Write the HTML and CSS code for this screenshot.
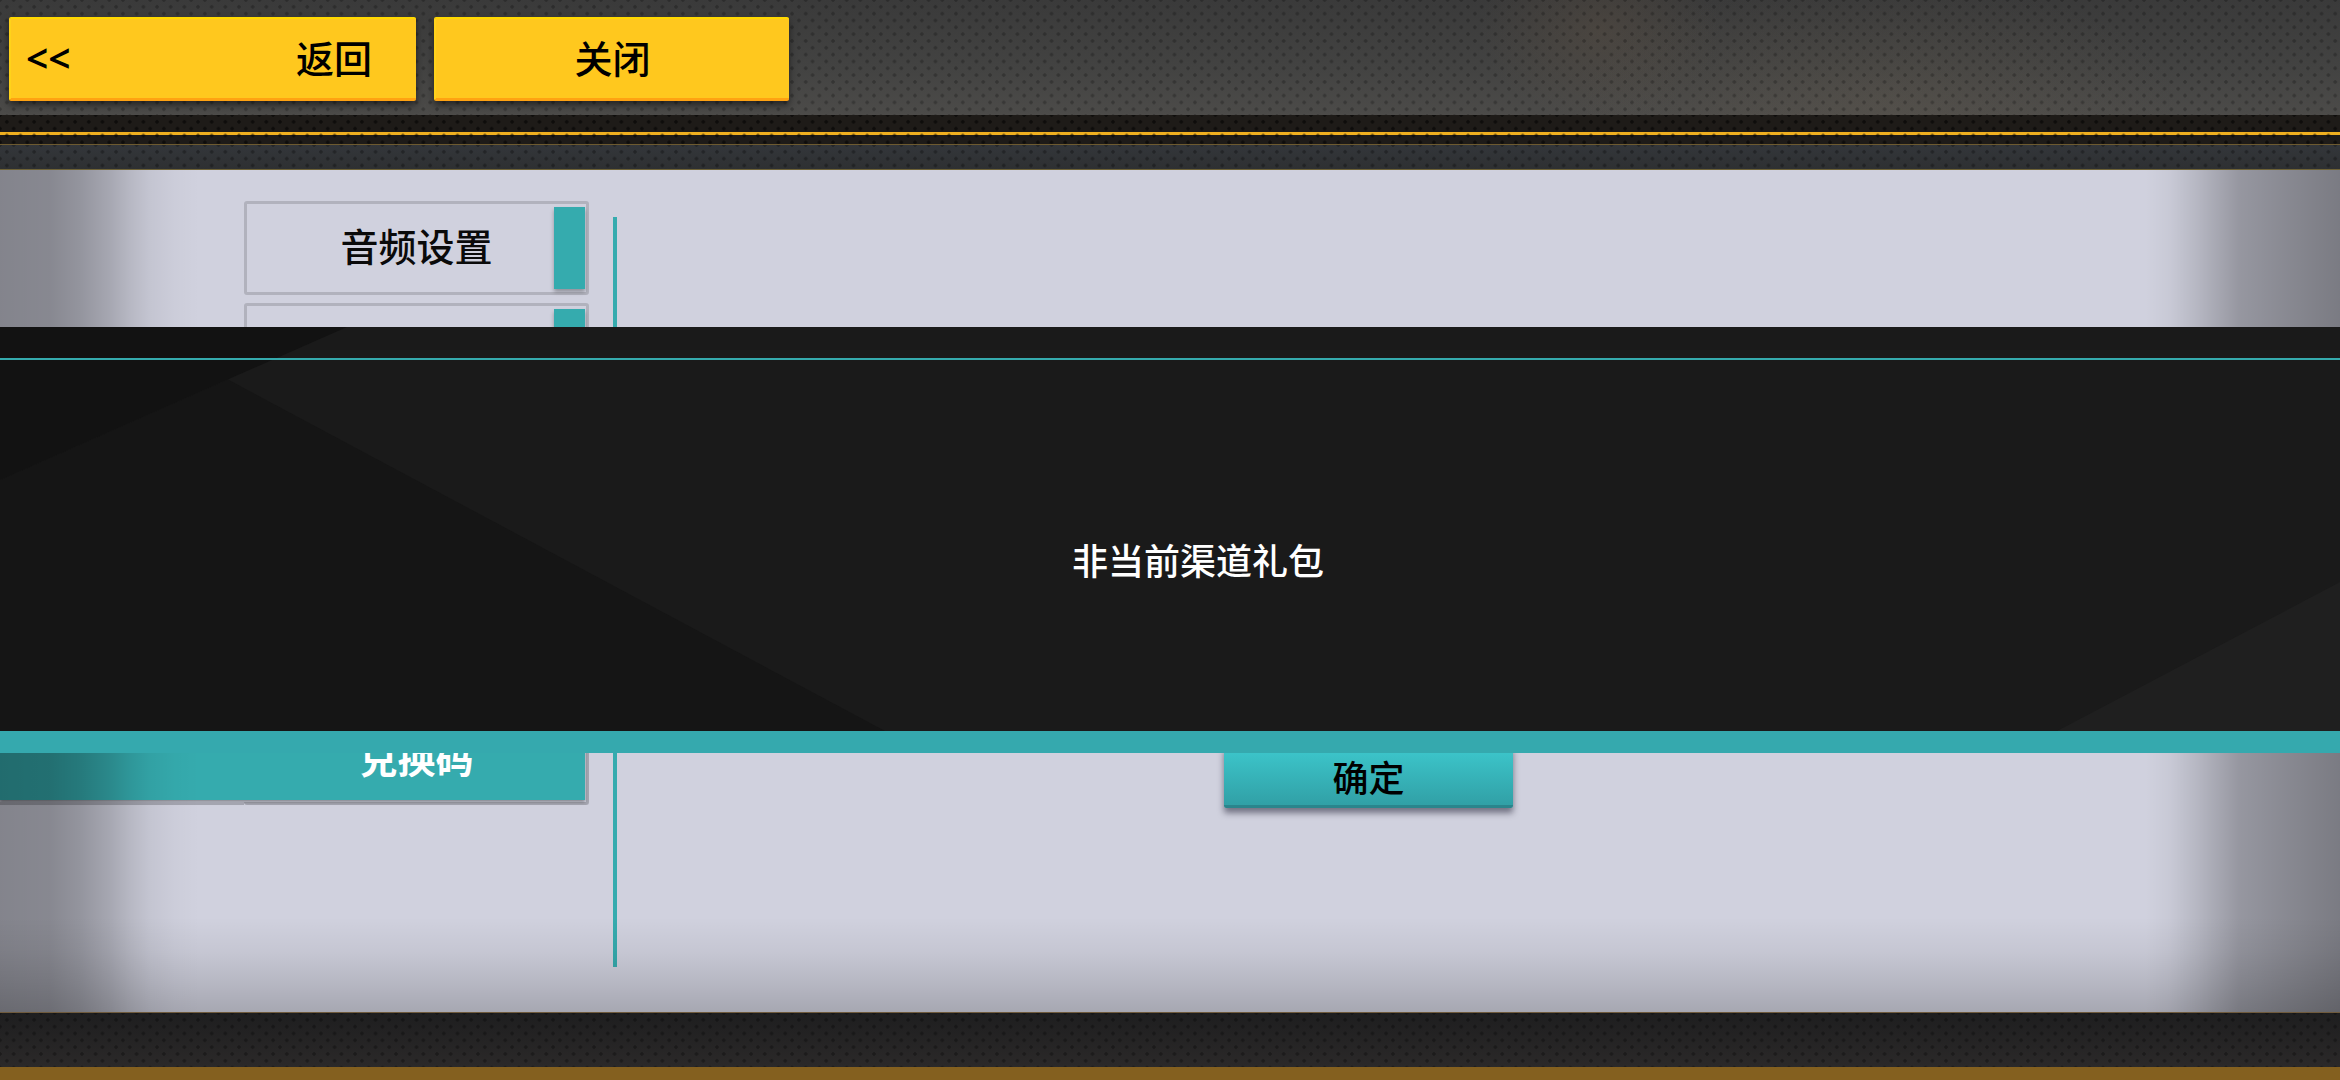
FILE: index.html
```html
<!DOCTYPE html>
<html lang="zh-CN">
<head>
<meta charset="utf-8">
<title>设置</title>
<link rel="stylesheet" href="styles.css">
</head>
<body>
<div class="app">
  <header class="topbar">
    <button class="btn-top btn-back"><span class="chev">&lt;&lt;</span><span>返回</span></button>
    <button class="btn-top btn-close">关闭</button>
  </header>
  <div class="rail">
    <div class="rail-upper"></div>
    <div class="rail-lower"></div>
  </div>
  <main class="panel">
    <nav class="side">
      <div class="item"><span class="item-label">音频设置</span><i class="tab"></i></div>
      <div class="item"><i class="tab"></i></div>
      <div class="item"><i class="tab"></i></div>
      <div class="item"><i class="tab"></i></div>
      <div class="item"><i class="tab"></i></div>
      <div class="item item-active"><span class="item-label">兑换码</span></div>
    </nav>
    <div class="divider"></div>
    <section class="content">
      <button class="btn-ok">确定</button>
    </section>
    <div class="vignette"></div>
  </main>
  <div class="bottombar"></div>
  <div class="goldbar"></div>

  <div class="dialog">
    <div class="dialog-body">
      <svg class="dialog-bg" viewBox="0 0 2340 404" width="2340" height="404" aria-hidden="true">
        <polygon points="0,153 228,52.5 885,404 0,404" fill="#151515"/>
        <polygon points="0,0 347,0 0,153" fill="#121212"/>
        <polygon points="2057,404 2340,255 2340,404" fill="#1f1f1f"/>
      </svg>
      <div class="dialog-line"></div>
      <p class="dialog-msg">非当前渠道礼包</p>
    </div>
    <div class="dialog-foot"></div>
  </div>
</div>
</body>
</html>
```
FILE: styles.css
```css
* { box-sizing: border-box; }
html, body { margin: 0; padding: 0; width: 2340px; height: 1080px; overflow: hidden; background: #222; }
body { font-family: "Noto Sans CJK SC", "Noto Sans", sans-serif; }
button { font-family: inherit; border: 0; padding: 0; margin: 0; color: #000; }

.app { position: relative; width: 2340px; height: 1080px; display: flex; flex-direction: column; }

/* top bar */
.topbar {
  height: 115px; flex: none; display: flex; gap: 18px; padding: 17px 0 0 9px; align-items: flex-start;
  background:
    radial-gradient(circle, rgba(0,0,0,.24) 1.4px, transparent 2.1px) 0 0 / 13.67px 13.67px,
    radial-gradient(circle, rgba(0,0,0,.24) 1.4px, transparent 2.1px) 6.83px 6.83px / 13.67px 13.67px,
    radial-gradient(ellipse 120px 90px at 1600px 30px, rgba(110,90,70,.25), transparent),
    radial-gradient(ellipse 300px 120px at 1880px 100px, rgba(120,105,85,.18), transparent),
    linear-gradient(180deg, #3a3a3a 0%, #434342 60%, #4c4b49 100%);
}
.btn-top {
  height: 84px; background: #ffc81e; font-size: 38px; font-weight: 500; line-height: 1; padding-bottom: 3px;
  border-top: 2px solid #ffd900; border-bottom: 3px solid #ffa212; border-left: 2px solid #ffd21a;
  border-radius: 2px; box-shadow: 0 4px 7px rgba(0,0,0,.5);
}
.btn-back { width: 407px; display: flex; align-items: center; justify-content: space-between; padding: 0 44px 3px 15px; }
.chev { font-family: "Noto Sans", sans-serif; font-size: 39px; font-weight: 600; }
.btn-close { width: 355px; text-align: center; }

/* rail under top bar */
.rail { height: 55px; flex: none; display: flex; flex-direction: column; }
.rail-upper {
  height: 30px; border-bottom: 1px solid #6d5a30; position: relative;
  background:
    radial-gradient(circle, rgba(0,0,0,.55) 1.4px, transparent 2.1px) 0 0 / 13.67px 13.67px,
    radial-gradient(circle, rgba(0,0,0,.55) 1.4px, transparent 2.1px) 6.83px 6.83px / 13.67px 13.67px,
    linear-gradient(#f0b020, #f0b020) 0 17px / 100% 3px no-repeat,
    #1e1b18;
}
.rail-lower {
  height: 25px; border-bottom: 1px solid #6e6236;
  background:
    radial-gradient(circle, rgba(0,0,0,.3) 1.4px, transparent 2.1px) 0 0 / 13.67px 13.67px,
    radial-gradient(circle, rgba(0,0,0,.3) 1.4px, transparent 2.1px) 6.83px 6.83px / 13.67px 13.67px,
    linear-gradient(180deg, #33363a, #2e3032);
}

/* main panel */
.panel { height: 842px; flex: none; position: relative; display: flex; background: #d0d1de; padding: 31px 0 0 0; }
.side { width: 589px; margin-left: 0; padding-left: 244px; display: flex; flex-direction: column; gap: 8px; flex: none; }
.item {
  position: relative; width: 345px; height: 94px; flex: none; display: flex; align-items: center; justify-content: center;
  border: 3px solid #b1b2bd; border-radius: 3px; padding-bottom: 6px;
}
.item-label { font-size: 38px; font-weight: 500; line-height: 1; color: #0a0a0a; }
.tab { position: absolute; right: 1px; top: 3px; width: 31px; height: 82px; background: #35abae; box-shadow: 0 3px 4px rgba(0,0,0,.3); }
.item-active { border-right-color: #a4a5b0; border-bottom-color: #a4a5b0; border-top: 0; border-left: 0; padding: 0 0 0 3px; }
.item-active::before {
  content: ""; position: absolute; left: -244px; right: 1px; top: 0; bottom: 2px; background: #35abae; box-shadow: 0 2px 3px rgba(0,0,0,.35);
}
.item-active::after {
  content: ""; position: absolute; left: -244px; width: 244px; bottom: -3px; height: 3px; background: #a4a5b0;
}
.item-active .item-label { position: relative; color: #fff; font-weight: 700; }
.divider { width: 4px; height: 750px; margin: 16px 0 0 24px; background: #35abae; flex: none; }
.content { flex: 1; position: relative; }
.btn-ok {
  display: block; width: 289px; height: 62px; margin: 545px 0 0 607px;
  font-size: 36px; font-weight: 500; line-height: 1; text-align: center; color: #000;
  background: linear-gradient(180deg, #3dc8cd, #31a0a6); border-bottom: 3px solid #2a858c; border-radius: 2px;
  box-shadow: 0 5px 6px rgba(20,20,40,.5);
}
.vignette {
  position: absolute; inset: 0; pointer-events: none;
  background:
    linear-gradient(0deg, rgba(0,0,0,.2) 0, rgba(0,0,0,.12) 30px, rgba(0,0,0,.05) 60px, transparent 95px),
    linear-gradient(90deg, rgba(0,0,0,.37) 0, rgba(0,0,0,.35) 50px, rgba(0,0,0,.29) 80px, rgba(0,0,0,.2) 110px, rgba(0,0,0,.12) 130px, rgba(0,0,0,.06) 150px, rgba(0,0,0,.02) 175px, transparent 200px),
    linear-gradient(270deg, rgba(0,0,0,.41) 0, rgba(0,0,0,.35) 50px, rgba(0,0,0,.28) 101px, rgba(0,0,0,.12) 144px, rgba(0,0,0,.04) 170px, transparent 195px);
}

/* bottom */
.bottombar {
  height: 55px; flex: none; border-top: 1px solid #6f5a3c;
  background:
    radial-gradient(circle, rgba(0,0,0,.3) 1.4px, transparent 2.1px) 0 0 / 13.67px 13.67px,
    radial-gradient(circle, rgba(0,0,0,.3) 1.4px, transparent 2.1px) 6.83px 6.83px / 13.67px 13.67px,
    linear-gradient(180deg, #1e1e1f, #2b2929);
}
.goldbar { height: 13px; flex: none; background: #84601f; }

/* modal dialog */
.dialog { position: absolute; left: 0; top: 327px; width: 2340px; height: 426px; display: flex; flex-direction: column; }
.dialog-body {
  position: relative; height: 404px; background: #1a1a1a; display: flex; align-items: center; justify-content: center;
  padding: 60px 0 0 56px;
}
.dialog-bg { position: absolute; left: 0; top: 0; }
.dialog-line { position: absolute; left: 0; right: 0; top: 31px; height: 2px; background: #35abae; }
.dialog-msg { position: relative; margin: 0; color: #fff; font-size: 36px; line-height: 1; font-weight: 500; }
.dialog-foot { height: 22px; background: #35a9ae; }
```
